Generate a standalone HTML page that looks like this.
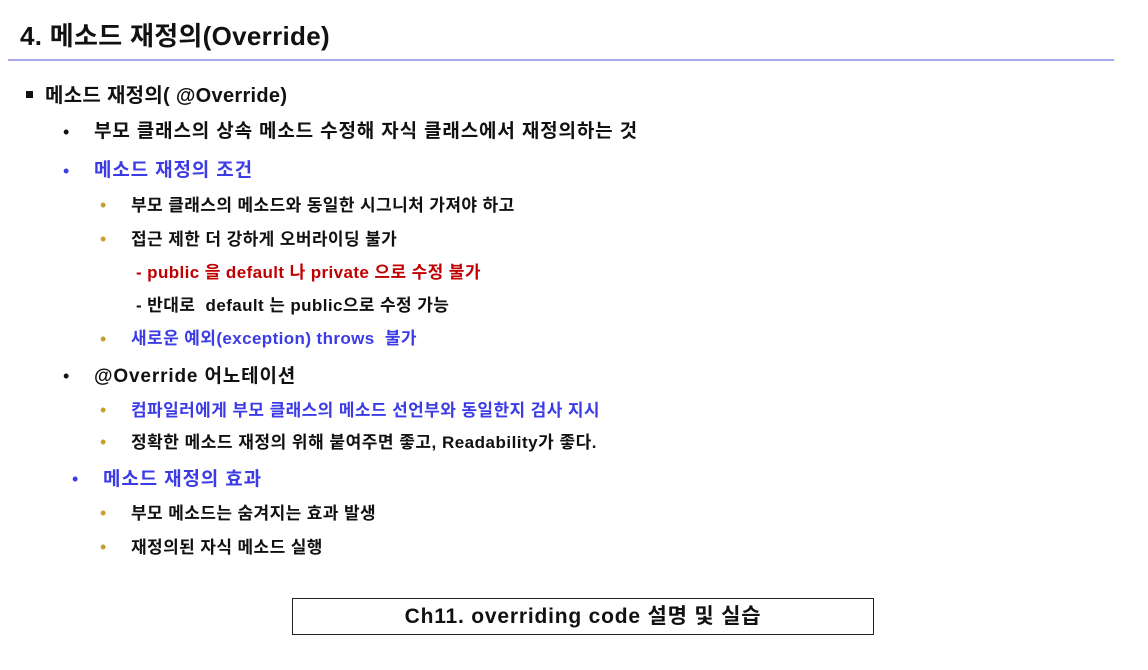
<!DOCTYPE html>
<html><head><meta charset="utf-8"><style>
body{margin:0;width:1148px;height:670px;background:#fff;font-family:"Liberation Sans","Noto Sans CJK KR",sans-serif;color:#111;position:relative;overflow:hidden}
.t{position:absolute;white-space:nowrap;line-height:1}
.b{position:absolute;line-height:1}
.blue{color:#3c3ce6}.red{color:#c00000}
.g{color:#c9a030;font-size:18px}
.l2{font-size:19px;letter-spacing:0.85px;font-weight:bold}
.l3{font-size:17px;letter-spacing:0.4px;font-weight:bold}
</style></head><body>
<div class="t" style="left:20px;top:23px;font-size:26px;font-weight:bold;letter-spacing:0.3px">4. 메소드 재정의(Override)</div>
<div style="position:absolute;left:8px;top:59px;width:1106px;height:2px;background:#a8a8f0"></div>

<div class="b" style="left:26px;top:91px;width:7px;height:7px;background:#111"></div>
<div class="t" style="left:45px;top:86px;font-size:20px;font-weight:bold;letter-spacing:0.3px">메소드 재정의( @Override)</div>

<div class="t" style="left:63px;top:123px;font-size:18px">•</div>
<div class="t l2" style="left:94px;top:122px">부모 클래스의 상속 메소드 수정해 자식 클래스에서 재정의하는 것</div>

<div class="t blue" style="left:63px;top:162px;font-size:18px">•</div>
<div class="t blue l2" style="left:94px;top:161px">메소드 재정의 조건</div>

<div class="t g" style="left:100px;top:196px">•</div>
<div class="t l3" style="left:131px;top:197px">부모 클래스의 메소드와 동일한 시그니처 가져야 하고</div>
<div class="t g" style="left:100px;top:230px">•</div>
<div class="t l3" style="left:131px;top:231px">접근 제한 더 강하게 오버라이딩 불가</div>
<div class="t red l3" style="left:136px;top:264px">- public 을 default 나 private 으로 수정 불가</div>
<div class="t l3" style="left:136px;top:297px">- 반대로 &nbsp;default 는 public으로 수정 가능</div>
<div class="t g" style="left:100px;top:330px">•</div>
<div class="t blue l3" style="left:131px;top:330px">새로운 예외(exception) throws &nbsp;불가</div>

<div class="t" style="left:63px;top:367px;font-size:18px">•</div>
<div class="t l2" style="left:94px;top:367px">@Override 어노테이션</div>
<div class="t g" style="left:100px;top:401px">•</div>
<div class="t blue l3" style="left:131px;top:402px">컴파일러에게 부모 클래스의 메소드 선언부와 동일한지 검사 지시</div>
<div class="t g" style="left:100px;top:433px">•</div>
<div class="t l3" style="left:131px;top:434px;letter-spacing:0.5px">정확한 메소드 재정의 위해 붙여주면 좋고, Readability가 좋다.</div>

<div class="t blue" style="left:72px;top:470px;font-size:18px">•</div>
<div class="t blue l2" style="left:103px;top:470px">메소드 재정의 효과</div>
<div class="t g" style="left:100px;top:504px">•</div>
<div class="t l3" style="left:131px;top:505px">부모 메소드는 숨겨지는 효과 발생</div>
<div class="t g" style="left:100px;top:538px">•</div>
<div class="t l3" style="left:131px;top:539px">재정의된 자식 메소드 실행</div>

<div style="position:absolute;left:292px;top:598px;width:582px;height:37px;border:1px solid #222;box-sizing:border-box;text-align:center;line-height:35px;font-size:21px;font-weight:bold;letter-spacing:0.8px">Ch11. overriding code 설명 및 실습</div>
</body></html>
